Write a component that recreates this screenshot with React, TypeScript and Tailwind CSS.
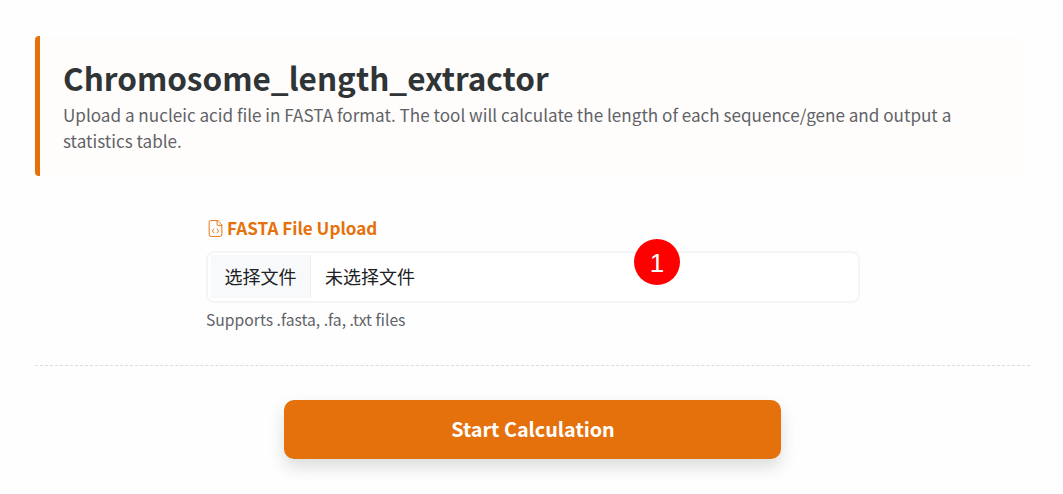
import { FileCode } from "lucide-react"

export default function App() {
    return (
        <div className="min-h-[494px] w-full overflow-hidden bg-[#fefefe] pl-[35px] pr-[33px] pt-[36px] font-['Noto_Sans_CJK_SC',sans-serif]">
            <div className="mr-[7px] flex h-[140px] flex-col rounded-[4px] border-l-[5px] border-[#e5710c] bg-[#fffdfb] pl-[23px] pr-[60px] pt-[20px]">
                <h1 className="text-[31.5px] font-bold leading-[42px] text-[#2f3437]">Chromosome_length_extractor</h1>
                <p className="mt-[4px] text-[17.1px] leading-[26px] text-[#5f6368]">
                    Upload a nucleic acid file in FASTA format. The tool will calculate the length of each sequence/gene and output a statistics table.
                </p>
            </div>

            <div className="mt-[39px] ml-[171px] w-[654px]">
                <div className="flex h-[26px] items-center gap-[2px] text-[17.1px] font-bold text-[#e5710c]">
                    <FileCode size={19} strokeWidth={1.2} />
                    <span>FASTA File Upload</span>
                </div>
                <div className="relative mt-[10px] flex h-[52px] items-center rounded-[8px] border-2 border-[#f4f5f6] bg-white pb-[3px] pl-[3px] pt-[2px]">
                    <div className="flex h-full w-[100px] items-center justify-center border-r border-[#eceef0] bg-[#f8f9fa] text-[18px] text-[#202124]">选择文件</div>
                    <span className="ml-[14px] text-[18px] text-[#202124]">未选择文件</span>
                    <div className="absolute left-[426px] top-[-14px] flex h-[46px] w-[46px] items-center justify-center rounded-full bg-[#fe0000] pt-[2px] font-['Liberation_Sans',sans-serif] text-[26px] text-white">1</div>
                </div>
                <p className="mt-[6px] text-[15.7px] leading-[22px] text-[#5f6368]">Supports .fasta, .fa, .txt files</p>
            </div>

            <div className="mt-[34px] border-t border-dashed border-[#dadce0]" />

            <div className="mt-[34px] flex justify-center pr-[1px]">
                <button className="h-[59px] w-[497px] rounded-[10px] bg-[#e5710c] pb-[2px] pl-[2px] text-[19.8px] font-bold text-white shadow-[0_8px_16px_rgba(60,64,67,0.18)]">
                    Start Calculation
                </button>
            </div>
        </div>
    )
}
